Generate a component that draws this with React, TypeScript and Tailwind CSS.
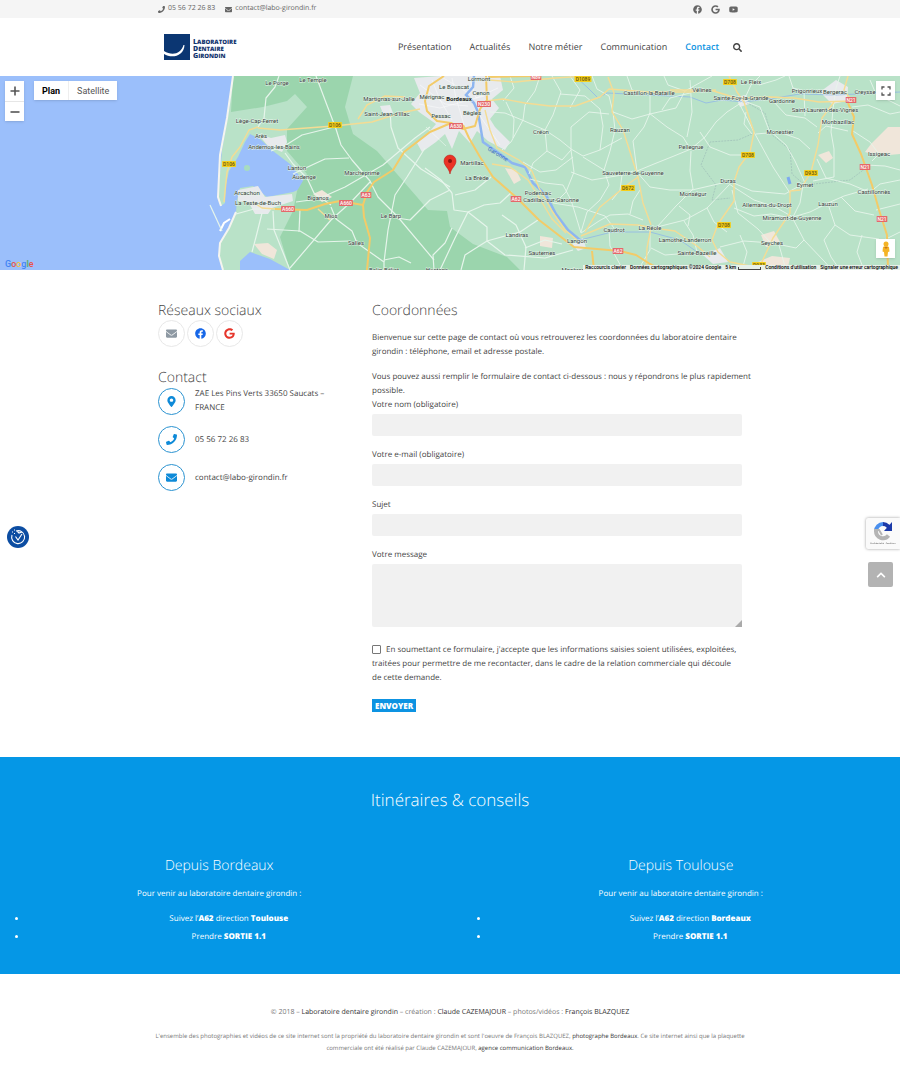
import type { ReactNode } from "react";
import {
  FaEnvelope,
  FaFacebook,
  FaGoogle,
  FaMapMarkerAlt,
  FaPhone,
  FaSearch,
  FaYoutube,
  FaChevronUp,
} from "react-icons/fa";

const nav = ["Présentation", "Actualités", "Notre métier", "Communication", "Contact"];

type Place = [string, number, number];

const places: Place[] = [
  ["Le Porge", 277, 81], ["Le Temple", 313, 78], ["Lège-Cap-Ferret", 257, 119],
  ["Arès", 261, 134], ["Andernos-les-Bains", 274, 145], ["Lanton", 297, 166],
  ["Audenge", 304, 175], ["Marcheprime", 362, 171], ["Arcachon", 247, 191],
  ["La Teste-de-Buch", 258, 201], ["Biganos", 318, 196], ["Mios", 331, 214],
  ["Le Barp", 391, 214], ["Salles", 356, 241], ["Belin-Béliet", 384, 268],
  ["Hostens", 437, 268], ["Martignas-sur-Jalle", 389, 97], ["Saint-Jean-d'Illac", 387, 112],
  ["Mérignac", 432, 95], ["Pessac", 441, 114], ["Le Bouscat", 454, 85],
  ["Lormont", 479, 77], ["Cenon", 481, 91], ["Bègles", 472, 111],
  ["Créon", 541, 130], ["Martillac", 472, 161], ["La Brède", 477, 176],
  ["Podensac", 538, 191], ["Cadillac-sur-Garonne", 551, 198], ["Landiras", 517, 233],
  ["Langon", 577, 239], ["Sauternes", 542, 251], ["Mazères", 573, 268],
  ["Castillon-la-Bataille", 649, 91], ["Rauzan", 620, 128], ["Sauveterre-de-Guyenne", 633, 171],
  ["Caudrot", 614, 228], ["La Réole", 650, 226], ["Lamothe-Landerron", 685, 238],
  ["Sainte-Bazeille", 697, 251], ["Vélines", 702, 88], ["Le Fleix", 751, 80],
  ["Sainte-Foy-la-Grande", 741, 96], ["Gardonne", 782, 99], ["Prigonrieux", 807, 89],
  ["Bergerac", 835, 90], ["Creysse", 865, 90], ["Saint-Laurent-des-Vignes", 825, 108],
  ["Monbazillac", 838, 120], ["Monestier", 780, 130], ["Pellegrue", 691, 145],
  ["Issigeac", 879, 152], ["Duras", 728, 179], ["Eymet", 805, 183],
  ["Monségur", 693, 192], ["Castillonnès", 874, 190], ["Allemans-du-Dropt", 767, 203],
  ["Lauzun", 828, 202], ["Miramont-de-Guyenne", 792, 216], ["Seyches", 772, 241],
];

const shields: [string, number, number, "red" | "yellow"][] = [
  ["D106", 335, 125, "yellow"], ["D106", 229, 164, "yellow"], ["A63", 366, 195, "red"],
  ["A660", 346, 203, "red"], ["A660", 288, 209, "red"], ["N230", 484, 104, "red"],
  ["A630", 456, 126, "red"], ["A62", 516, 199, "red"], ["A62", 618, 251, "red"],
  ["N89", 536, 77, "red"], ["D1089", 583, 79, "yellow"], ["D708", 730, 82, "yellow"],
  ["D708", 748, 155, "yellow"], ["D708", 724, 225, "yellow"], ["D672", 628, 188, "yellow"],
  ["D933", 811, 173, "yellow"], ["N21", 851, 100, "red"], ["N21", 865, 167, "red"],
  ["N21", 882, 219, "red"], ["D933", 759, 265, "yellow"],
];

const coastRoads = [
  "M279 76 L275 87 L266 98 L264 118 L258 127", "M316 76 L325 100 L336 129 L341 145 L352 160 L370 181 L378 197 L397 216 L434 260",
  "M210 205 L222 231", "M271 151 L286 145 L302 135 L334 127", "M285 153 L293 164 L307 178 L314 193 L331 205",
  "M293 174 L312 165 L325 159 L349 158", "M296 202 L318 199 L345 187 L383 165 L415 138 L430 127",
  "M236 214 L254 209 L271 209", "M273 211 L274 230 L290 270", "M290 268 L331 220 L351 202 L370 182",
  "M331 207 L336 219 L352 231 L357 243 L384 262 L384 270", "M384 262 L388 230 L395 195 L407 177 L425 148",
  "M397 218 L410 220 L430 200 L450 190", "M390 108 L391 127 L398 148 L421 169 L450 187",
  "M262 213 L256 237 L252 252", "M267 229 L300 231 L318 242", "M300 209 L299 232",
  "M318 242 L350 241", "M384 260 L399 257 L411 263", "M434 270 L433 255 L445 243 L452 228",
  "M452 193 L454 210 L468 212 L487 227 L487 241", "M452 193 L441 180 L425 168",
  "M468 212 L484 205 L500 203 L512 192", "M455 195 L475 190 L491 177", "M468 212 L455 238 L440 270",
  "M487 241 L465 255 L461 270", "M487 241 L520 232 L538 220", "M502 215 L516 225 L526 247 L524 270",
  "M487 241 L505 255 L545 258 L573 250", "M525 248 L545 240 L562 244",
];

const ruralRoads = [
  "M490 112 L505 113 L522 120 L545 130 L560 140 L571 149 L583 156 L600 150 L622 138",
  "M540 76 L535 91 L525 105 L523 120 L511 142 L502 150", "M506 102 L514 119 L513 138",
  "M552 76 L561 92 L553 115 L545 130 L547 151 L533 163 L529 174", "M547 151 L562 160 L571 150 L571 127 L589 112 L609 114",
  "M571 150 L574 172 L566 192 L556 202", "M571 172 L592 180 L622 175 L633 171", "M570 108 L580 90 L570 76",
  "M523 162 L540 172 L556 170 L573 157", "M530 179 L545 183 L563 185 L571 200 L581 233",
  "M581 232 L587 212 L600 200 L609 185 L604 170 L583 157", "M553 203 L578 207 L605 216 L614 228",
  "M581 233 L599 221 L610 215 L628 214 L643 220", "M604 170 L610 151 L615 130 L613 112",
  "M600 150 L603 126 L600 109 L585 96 L560 94", "M650 92 L650 113 L644 127 L633 141 L637 171",
  "M613 112 L632 119 L650 114 L676 108 L685 91", "M649 113 L667 127 L683 137 L691 150",
  "M637 171 L654 164 L674 156 L691 149", "M691 151 L690 171 L693 189 L676 206 L657 227",
  "M636 171 L650 187 L670 190 L692 190 L718 184 L728 181", "M657 227 L685 220 L707 208 L729 185",
  "M691 149 L705 137 L716 122 L727 112 L744 101", "M690 80 L692 112 L687 137",
  "M650 227 L650 250 L638 270", "M651 248 L665 255 L690 253", "M609 229 L610 246 L623 270",
  "M729 181 L752 191 L785 194 L792 190 L805 183", "M790 193 L773 167 L755 134 L739 103",
  "M744 101 L760 107 L769 130 L786 145 L795 161 L805 183", "M756 134 L779 132 L799 139 L810 149",
  "M773 101 L786 115 L805 118 L817 127", "M759 85 L776 80 L785 76", "M745 98 L751 85 L760 76",
  "M789 76 L793 88 L804 91 L805 116", "M840 76 L836 88 L833 109 L831 132 L834 149 L834 177 L813 181",
  "M817 159 L826 178 L850 184 L869 192", "M853 131 L870 142 L879 154 L872 161", "M803 185 L800 203 L793 217",
  "M793 217 L810 212 L828 203 L844 196 L868 189", "M793 219 L804 240 L824 261 L832 270",
  "M793 217 L775 207 L754 200 L729 184", "M829 207 L835 225 L824 240 L831 257 L840 270",
  "M835 225 L850 235 L879 239", "M841 197 L855 211 L874 215", "M732 190 L738 213 L758 229 L771 243",
  "M734 208 L754 216 L771 214 L791 218", "M720 247 L744 241 L772 243 L796 248 L804 240",
  "M740 235 L747 252 L742 270", "M684 221 L693 235 L697 252", "M707 208 L714 222 L727 232",
  "M679 206 L690 215 L688 226", "M630 214 L633 201 L640 190", "M622 175 L620 190 L612 200",
  "M870 80 L876 94 L900 106", "M852 107 L868 105 L890 114 L900 112", "M848 131 L826 126 L818 133",
  "M869 193 L880 184 L900 180", "M876 210 L900 204", "M866 165 L885 166 L900 170",
  "M700 132 L710 147 L730 155 L746 155", "M752 134 L744 124 L746 112", "M662 110 L670 98 L690 93",
  "M592 76 L597 89 L609 96 L613 112", "M627 76 L632 90 L649 94", "M664 76 L668 85 L685 91 L712 76",
  "M884 240 L900 232", "M862 235 L857 252 L864 270", "M779 245 L786 270", "M510 76 L514 88 L503 101",
];

const yellowRoads = [
  "M258 128 L280 130 L334 126 L372 122 L400 113 L420 109", "M258 127 L249 130 L240 147 L232 157 L227 172 L224 202",
  "M358 119 L367 105 L385 96 L405 97", "M253 202 L262 208 L275 209", "M318 209 L330 220",
  "M486 101 L503 99 L525 103 L550 106 L575 106 L600 97 L609 89 L648 92 L690 92 L716 90",
  "M489 80 L515 82 L555 78 L587 76", "M485 110 L490 130 L497 148 L519 160 L532 171 L539 188 L552 211 L565 230 L577 240",
  "M492 164 L510 167 L528 180 L540 199 L552 219 L566 233", "M581 236 L610 224 L638 225 L653 228 L675 231 L697 246 L710 257",
  "M608 77 L614 93 L612 112 L623 130 L631 155 L638 177 L643 203 L651 225", "M638 177 L627 185 L600 207 L585 232",
  "M651 228 L647 248 L646 270", "M729 76 L737 92 L744 102 L754 132 L750 152 L739 167 L734 182 L734 201 L718 224 L712 240 L718 252 L730 262 L760 268",
  "M742 98 L770 97 L794 98 L819 102 L852 101 L844 90 L848 76", "M834 102 L822 118 L818 145 L811 172 L800 190 L790 191 L790 213 L773 238 L760 266",
  "M670 90 L710 90 L740 99",
];

const motorways = [
  "M275 209 L307 210 L325 204 L340 201 L363 205 L367 192 L374 182 L393 170 L404 152 L430 132 L451 123",
  "M363 205 L364 217 L370 238 L367 270", "M444 76 L429 86 L425 101 L427 111 L437 121 L451 123 L463 129 L475 126 L480 109 L487 100 L486 76",
  "M463 125 L469 138 L480 157 L493 177 L517 198 L539 220 L574 247 L620 251 L636 255 L650 264 L661 270",
  "M848 103 L854 117 L852 134 L861 154 L872 185 L879 210 L887 235 L888 270", "M592 251 L594 270", "M488 77 L536 76",
];

function Map() {
  return (
    <svg
      className="block h-full w-full"
      viewBox="0 76 900 194"
      preserveAspectRatio="xMidYMid slice"
      role="img"
      aria-label="Carte de la Gironde"
    >
      <rect x="0" y="76" width="900" height="194" fill="#9bbffb" />
      <path d="M233 76 L229 110 L222 150 L218 197 L221 206 L225 203 L226 185 L229 171 L238 157 L245 142 L250 134 L260 139 L273 151 L290 164 L298 174 L307 186 L293 192 L267 197 L253 186 L240 188 L237 200 L236 212 L229 229 L220 243 L219 256 L223 270 L900 270 L900 76Z" fill="#b9e2c8" />
      <path d="M233 76 L353 76 L345 107 L353 134 L377 151 L397 174 L417 197 L428 210 L447 211 L450 227 L473 244 L507 257 L520 270 L290 270 L280 237 L293 211 L297 191 L307 174 L287 151 L287 129 L307 107 L295 94 L287 101 L263 107 L231 112Z" fill="#9bd5ad" />
      <path d="M233 76 L227 118 L220 155 L218 197 L221 206" fill="none" stroke="#f5f5ef" strokeWidth="2" />
      <path d="M236 212 L229 228 L220 243 L219 256 L223 270" fill="none" stroke="#f5f5ef" strokeWidth="2" />
      <path d="M220 231 L224 223 L230 219" fill="none" stroke="#fff" strokeWidth="2" />
      <path d="M240 270 L240 261 L250 252 L270 259 L290 270Z" fill="#9bbffb" />
      <circle cx="247" cy="168" r="3" fill="#a7dcc0" />
      <g fill="#f0e6da">
        <path d="M254 244 L268 243 L277 250 L274 259 L262 254Z" />
        <path d="M313 194 L322 190 L332 197 L322 202Z" />
        <path d="M505 168 L516 170 L521 180 L514 184Z" />
        <path d="M540 236 L553 238 L552 248 L540 246Z" />
        <path d="M818 155 L829 151 L833 158 L826 163Z" />
        <path d="M871 144 L888 127 L900 127 L900 154 L878 156 L865 152Z" />
        <path d="M761 235 L774 231 L780 242 L766 247Z" />
        <path d="M758 262 L772 256 L790 258 L788 267 L762 269Z" />
      </g>
      <g fill="#e8eaed">
        <path d="M414 78 L440 76 L500 76 L503 90 L492 99 L499 108 L490 119 L495 127 L510 142 L505 150 L488 141 L477 131 L470 143 L459 131 L452 149 L445 134 L436 142 L422 152 L417 143 L430 131 L436 124 L419 112 L411 104 L420 93Z" />
        <path d="M238 190 L258 186 L265 197 L292 194 L293 201 L272 208 L268 214 L255 214 L249 203 L238 201Z" />
        <path d="M258 134 L271 138 L285 135 L287 142 L282 152 L268 146Z" />
        <path d="M820 92 L836 80 L848 87 L847 101 L832 104Z" />
        <path d="M736 97 L746 95 L749 104 L740 107Z" />
        <path d="M703 255 L720 248 L728 262 L713 264Z" />
        <path d="M572 244 L583 238 L586 248 L578 251Z" />
        <path d="M380 106 L390 105 L393 113 L384 116Z" />
      </g>
      <g fill="none" stroke="#fff" strokeWidth="0.5" opacity="0.9">
        <path d="M420 85 L445 104 L468 106 M432 80 L440 100 L452 120 M452 78 L456 98 L464 125 M419 104 L440 108 L484 96 M426 127 L446 146 M470 80 L476 98 L498 88 M480 116 L500 145 M440 76 L470 94" />
      </g>
      <path d="M474 76 L473 87 L466 95 L474 103 L478 112 L483 142 L500 154 L512 163 L525 167 L533 183 L546 195 L556 214 L568 230 L580 240" fill="none" stroke="#8db5f0" strokeWidth="2.5" />
      <g fill="none" stroke="#8fb7e8" strokeWidth="0.8">
        <path d="M575 76 L588 88 L598 98 L607 93 L650 95 L690 97 L706 103 L722 100 L744 102 L775 98 L800 94 L835 95 L900 92" />
        <path d="M580 240 L612 232 L650 232 L680 240 L700 254" />
      </g>
      <path d="M788 177 L790 184" stroke="#7daaf0" strokeWidth="3" />
      <path d="M744 101 L765 113 L771 134 L790 150 L792 174 L805 185 L850 180 L866 168 M752 134 L738 140 L710 142 L701 165 L716 185 L712 200 L730 198" fill="none" stroke="#92aeb0" strokeWidth="0.5" strokeDasharray="2 1" />
      <g fill="none" stroke="#e6f5eb" strokeWidth="0.9" strokeLinejoin="round">
        {ruralRoads.map((d) => <path key={d} d={d} />)}
      </g>
      <g fill="none" stroke="#e6f5eb" strokeWidth="1.2" strokeLinejoin="round">
        {coastRoads.map((d) => <path key={d} d={d} />)}
      </g>
      <g fill="none" stroke="#f4dc94" strokeWidth="1.4" strokeLinejoin="round">
        {yellowRoads.map((d) => <path key={d} d={d} />)}
      </g>
      <g fill="none" stroke="#f3cb68" strokeWidth="2" strokeLinejoin="round">
        {motorways.map((d) => <path key={d} d={d} />)}
      </g>
      <g fontFamily="Roboto, sans-serif" textAnchor="middle">
        {shields.map(([name, x, y, tone]) => (
          <g key={name + x}>
            <rect
              x={x - name.length * 1.6 - 0.5}
              y={y - 3}
              width={name.length * 3.2 + 1}
              height="6"
              rx="0.6"
              fill={tone === "red" ? "#e4686a" : "#f5ce1b"}
            />
            <text x={x} y={y + 2} fontSize="5" fontWeight="500" fill={tone === "red" ? "#fff" : "#5f5410"}>
              {name}
            </text>
          </g>
        ))}
        <g fontSize="6" fill="#333c38" stroke="#e8f5ec" strokeWidth="0.8" paintOrder="stroke">
          {places.map(([name, x, y]) => (
            <text key={name} x={x} y={y + 4}>{name}</text>
          ))}
          <text x="459" y="101" fontWeight="700" fill="#1c1c1c">Bordeaux</text>
        </g>
        <text x="498" y="156" fontSize="6" fill="#3d70c0" transform="rotate(32 498 154)">Garonne</text>
      </g>
      <path d="M450 174 C449 168 444 166 444 161 A6 6 0 0 1 456 161 C456 166 451 168 450 174Z" fill="#ea3325" stroke="#b31412" strokeWidth="0.5" />
      <circle cx="450" cy="161" r="2" fill="#8c1510" />
    </svg>
  );
}

function Logo() {
  return (
    <a href="#accueil" aria-label="Laboratoire Dentaire Girondin" className="flex items-end gap-[3px] text-[#14366f]">
      <svg viewBox="0 0 26 26" className="size-[26px]">
        <rect width="26" height="26" fill="#0b3672" />
        <path d="M0 17 C8 22 17 20 19.500 11 L20.500 11 C20 22 8 25 0 20Z" fill="#fff" />
      </svg>
      <span className="flex flex-col text-[6px] leading-[7px] font-extrabold uppercase">
        {["Laboratoire", "Dentaire", "Girondin"].map((word) => (
          <span key={word} className="first-letter:text-[7px]">{word}</span>
        ))}
      </span>
    </a>
  );
}

function Field({ id, label, type = "text" }: { id: string; label: string; type?: string }) {
  return (
    <div className="mb-3">
      <label htmlFor={id} className="block">{label}</label>
      <input id={id} type={type} className="mt-0.5 block h-[22px] w-full rounded-xs bg-[#f1f1f1] px-2 outline-none" />
    </div>
  );
}

function ContactRow({ icon, children }: { icon: ReactNode; children: ReactNode }) {
  return (
    <li className="flex items-center gap-2.5">
      <span className="flex size-[27px] shrink-0 items-center justify-center rounded-full border border-[#2b93d1] text-[11px] text-[#0e8ad8]">
        {icon}
      </span>
      <span>{children}</span>
    </li>
  );
}

function Route({ from, direction }: { from: string; direction: string }) {
  return (
    <div>
      <h3 className="text-[14px] leading-5 font-light">{from}</h3>
      <p className="mt-[11px] font-medium">Pour venir au laboratoire dentaire girondin :</p>
      <ul className="mt-[11px] list-disc space-y-1 pr-2 pl-[27px] font-medium">
        <li>Suivez l’<b className="font-extrabold">A62</b> direction <b className="font-extrabold">{direction}</b></li>
        <li>Prendre <b className="font-extrabold">SORTIE 1.1</b></li>
      </ul>
    </div>
  );
}

export default function App() {
  return (
    <div className="relative min-h-screen bg-white font-['Open_Sans',sans-serif] text-[8px] leading-[14px] text-[#444] [text-rendering:geometricPrecision]">
      <div className="bg-[#f5f5f5] text-[7px] text-[#666]">
        <div className="mx-auto flex h-[18px] max-w-[584px] items-center justify-between">
          <div className="flex gap-2.5">
            <a href="tel:0556722683" className="flex items-center gap-[3px]"><FaPhone />05 56 72 26 83</a>
            <a href="mailto:contact@labo-girondin.fr" className="flex items-center gap-[3px]"><FaEnvelope />contact@labo-girondin.fr</a>
          </div>
          <div className="flex gap-[9px] pr-1 text-[9px]">
            <a href="#facebook" aria-label="Facebook"><FaFacebook /></a>
            <a href="#google" aria-label="Google"><FaGoogle /></a>
            <a href="#youtube" aria-label="YouTube"><FaYoutube /></a>
          </div>
        </div>
      </div>

      <header className="mx-auto flex h-[58px] max-w-[584px] items-center justify-between pl-1.5">
        <Logo />
        <nav className="flex items-center gap-[18px] text-[9px]">
          {nav.map((item) => (
            <a key={item} href={"#" + item} className={item === "Contact" ? "font-semibold text-[#0d93e2]" : "text-[#444]"}>{item}</a>
          ))}
          <button type="button" aria-label="Rechercher" className="-ml-1"><FaSearch /></button>
        </nav>
      </header>

      <section className="relative h-[194px] overflow-hidden font-[Roboto,sans-serif] [text-rendering:auto]">
        <Map />
        <div className="absolute top-[5px] left-[5px] flex w-[19px] flex-col bg-white shadow-sm">
          <button type="button" aria-label="Zoom avant" className="flex h-5 items-center justify-center">
            <svg viewBox="0 0 10 10" className="size-2.5"><path d="M0.500 5H9.500M5 0.500V9.500" stroke="#555" strokeWidth="1.600" /></svg>
          </button>
          <button type="button" aria-label="Zoom arrière" className="flex h-5 items-center justify-center border-t border-[#e6e6e6]">
            <svg viewBox="0 0 10 10" className="size-2.5"><path d="M0.500 5H9.500" stroke="#555" strokeWidth="1.600" /></svg>
          </button>
        </div>
        <div className="absolute top-[5px] left-[34px] flex h-[19px] bg-white text-[9px] shadow-sm">
          <button type="button" className="border-r border-[#eee] px-2 font-bold text-black">Plan</button>
          <button type="button" className="px-2 text-[#555]">Satellite</button>
        </div>
        <button type="button" aria-label="Plein écran" className="absolute top-[5px] right-[5px] flex size-[19px] items-center justify-center bg-white shadow-sm">
          <svg viewBox="0 0 10 10" className="size-2.5" fill="none" stroke="#555" strokeWidth="1.300"><path d="M1 3.500V1H3.500M6.500 1H9V3.500M9 6.500V9H6.500M3.500 9H1V6.500" /></svg>
        </button>
        <button type="button" aria-label="Street View" className="absolute right-[5px] bottom-3 flex size-[19px] items-center justify-center bg-white shadow-sm">
          <svg viewBox="0 0 10 16" className="h-4">
            <path d="M2 6 Q5 4 8 6 L8.500 10.500 L7 11 L6.500 15.500 H3.500 L3 11 L1.500 10.500Z" fill="#f4b326" />
            <circle cx="5" cy="3" r="2.500" fill="#f4b326" />
            <path d="M3 6 L5 8 L7 6Z" fill="#c9761c" />
          </svg>
        </button>
        <div className="absolute bottom-0 left-[5px] text-[9px] leading-3 font-medium">
          <span className="text-[#4285f4]">G</span><span className="text-[#e8544a]">o</span><span className="text-[#f5c343]">o</span><span className="text-[#4285f4]">g</span><span className="text-[#50ad64]">l</span><span className="text-[#e8544a]">e</span>
        </div>
        <div className="absolute right-0 bottom-0 flex h-[5px] items-center gap-1 bg-[#e7f0e9] px-0.5 text-[5px] leading-[5px] font-medium text-black">
          <button type="button">Raccourcis clavier</button>
          <span>Données cartographiques ©2024 Google</span>
          <span className="flex items-end gap-0.5">5 km <span className="h-[3px] w-[23px] border border-t-0 border-[#444]" /></span>
          <a href="#conditions">Conditions d'utilisation</a>
          <a href="#erreur">Signaler une erreur cartographique</a>
        </div>
      </section>

      <main className="mx-auto grid max-w-[584px] grid-cols-[1fr_370px] gap-8 pt-[31px] pb-[45px]">
        <aside>
          <h2 className="text-[14px] leading-5 font-light">Réseaux sociaux</h2>
          <div className="-mt-px flex gap-0.5 text-[11px]">
            <a href="mailto:contact@labo-girondin.fr" aria-label="E-mail" className="flex size-[27px] items-center justify-center rounded-full border border-[#e8e8e8] text-[#8e99a3]"><FaEnvelope /></a>
            <a href="#facebook" aria-label="Facebook" className="flex size-[27px] items-center justify-center rounded-full border border-[#e8e8e8] text-[#1767e8]"><FaFacebook /></a>
            <a href="#google" aria-label="Google" className="flex size-[27px] items-center justify-center rounded-full border border-[#e8e8e8] text-[#e6352b]"><FaGoogle /></a>
          </div>
          <h2 className="mt-[21px] text-[14px] leading-5 font-light">Contact</h2>
          <ul className="-mt-px space-y-[11px]">
            <ContactRow icon={<FaMapMarkerAlt />}>ZAE Les Pins Verts 33650 Saucats – FRANCE</ContactRow>
            <ContactRow icon={<FaPhone />}>05 56 72 26 83</ContactRow>
            <ContactRow icon={<FaEnvelope />}>contact@labo-girondin.fr</ContactRow>
          </ul>
        </aside>

        <section>
          <h2 className="text-[14px] leading-5 font-light">Coordonnées</h2>
          <p className="mt-2.5">Bienvenue sur cette page de contact où vous retrouverez les coordonnées du laboratoire dentaire girondin : téléphone, email et adresse postale.</p>
          <p className="mt-[11px] -mr-4">Vous pouvez aussi remplir le formulaire de contact ci-dessous : nous y répondrons le plus rapidement possible.</p>
          <form onSubmit={(event) => event.preventDefault()}>
            <Field id="nom" label="Votre nom (obligatoire)" />
            <Field id="email" label="Votre e-mail (obligatoire)" type="email" />
            <Field id="sujet" label="Sujet" />
            <label htmlFor="message" className="block">Votre message</label>
            <div className="relative mt-0.5">
              <textarea id="message" className="block h-[63px] w-full resize-none rounded-xs bg-[#f1f1f1] p-2 outline-none" />
              <svg viewBox="0 0 7 7" className="absolute right-0 bottom-0 size-[7px]"><path d="M7 0V7H0Z" fill="#aaa" /></svg>
            </div>
            <label className="mt-4 block">
              <input type="checkbox" className="mr-[5px] size-[9px] appearance-none rounded-[1px] border border-[#777] bg-white align-middle checked:bg-[#0e93e0]" />
              En soumettant ce formulaire, j'accepte que les informations saisies soient utilisées, exploitées, traitées pour permettre de me recontacter, dans le cadre de la relation commerciale qui découle de&nbsp;cette demande.
            </label>
            <button type="submit" className="mt-3.5 block h-[13px] bg-[#0d93e2] px-[3px] leading-[13px] font-extrabold text-white">ENVOYER</button>
          </form>
        </section>
      </main>

      <section className="bg-[#0597e6] pt-[30px] pb-[30px] text-center text-white">
        <h2 className="text-[17px] leading-[26px] font-light">Itinéraires &amp; conseils</h2>
        <div className="mt-[43px] grid grid-cols-2 gap-[23px]">
          <Route from="Depuis Bordeaux" direction="Toulouse" />
          <Route from="Depuis Toulouse" direction="Bordeaux" />
        </div>
      </section>

      <footer className="mx-auto max-w-[600px] pt-8 pb-[30px] text-center text-[#777]">
        <p className="text-[7px]">© 2018 – <a href="#labo" className="text-[#333]">Laboratoire dentaire girondin</a> – création : <a href="#claude" className="text-[#333]">Claude CAZEMAJOUR</a> – photos/vidéos : <a href="#francois" className="text-[#333]">François BLAZQUEZ</a></p>
        <p className="mt-2.5 text-[6px] leading-3">
          L'ensemble des photographies et vidéos de ce site internet sont la propriété du laboratoire dentaire girondin et sont l'oeuvre de François BLAZQUEZ, <a href="#photographe" className="text-[#333]">photographe Bordeaux</a>. Ce site internet ainsi que la plaquette commerciale ont été réalisé par Claude CAZEMAJOUR, <a href="#agence" className="text-[#333]">agence communication Bordeaux.</a>
        </p>
      </footer>

      <button type="button" aria-label="Préférences de cookies" className="fixed top-[526px] left-[7px] size-[22px]">
        <svg viewBox="0 0 22 22" fill="none" stroke="#fff" strokeWidth="1.100">
          <circle cx="11" cy="11" r="11" fill="#0c4da2" stroke="none" />
          <path d="M9 5 A6.500 6.500 0 1 1 5 9 M8.500 10.500 L11 14 L15 8 M10 5 L12 7 L15 6" />
          <path d="M5 6h1M7 4h1M7 7.500h1" />
        </svg>
      </button>
      <div className="fixed top-[518px] right-0 flex h-[31px] w-[34px] flex-col items-center justify-center overflow-hidden rounded-l-xs bg-[#fafafa] shadow-[0_0_3px_#999]">
        <svg viewBox="0 0 20 20" className="size-5" fill="none" strokeWidth="4">
          <path d="M3 10 A7 7 0 0 1 10 3" stroke="#4a90ee" />
          <path d="M10 3 A7 7 0 0 1 17 10" stroke="#1c3aa9" />
          <path d="M3 10 A7 7 0 0 0 15.500 14.500" stroke="#b4b4b4" />
          <path d="M19 1V10H11Z" fill="#1c3aa9" />
          <path d="M1 9L6 9L9 14" stroke="#b4b4b4" strokeWidth="2" />
        </svg>
        <span className="text-[2px] leading-[5px] whitespace-nowrap text-[#333]">Confidentialité - Conditions</span>
      </div>
      <button type="button" aria-label="Haut de page" className="fixed top-[562px] right-[7px] flex size-[25px] items-center justify-center rounded-xs bg-[#b3b3b3] text-[10px] text-white">
        <FaChevronUp />
      </button>
    </div>
  );
}
